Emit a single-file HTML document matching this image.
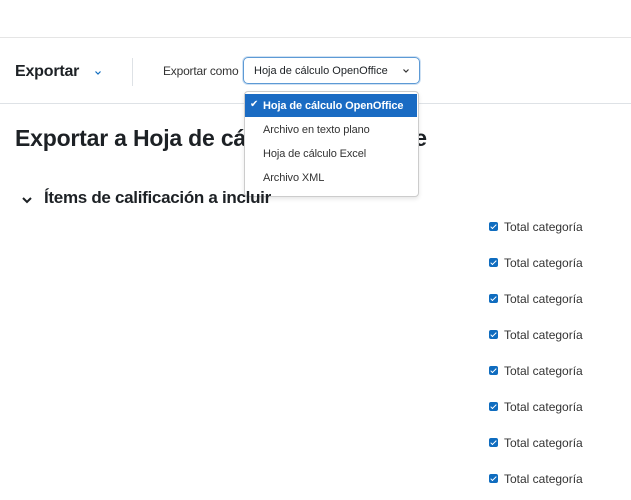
<!DOCTYPE html>
<html><head><style>
body{margin:0;width:631px;height:500px;background:#fff;font-family:"Liberation Sans",Arial,sans-serif;color:#1d2125;position:relative;overflow:hidden}
.a{position:absolute}
.cb{position:absolute;left:489px;width:9px;height:9px;background:#0f6cbf;border-radius:2px}
.cb:after{content:"";position:absolute;left:3px;top:1px;width:2px;height:5px;border:solid #fff;border-width:0 1.5px 1.5px 0;transform:rotate(45deg)}
.tl{position:absolute;left:504px;font-size:12px;color:#333}
.opt{position:absolute;left:263px;font-size:11px;color:#333;letter-spacing:-0.1px}
</style></head><body>
<div class="a" style="left:0;top:37px;width:631px;height:1px;background:#e5e5e5"></div>
<div class="a" style="left:0;top:103px;width:631px;height:1px;background:#dee2e6"></div>
<div class="a" style="left:15px;top:63px;font-size:16px;font-weight:bold;letter-spacing:-0.2px">Exportar</div>
<svg class="a" style="left:94px;top:70px" width="8" height="6"><path d="M1.5 1.5L4 4L6.5 1.5" fill="none" stroke="#0f6cbf" stroke-width="1.2"/></svg>
<div class="a" style="left:132px;top:58px;width:1px;height:28px;background:#dee2e6"></div>
<div class="a" style="left:163px;top:64px;font-size:12px;color:#333;letter-spacing:-0.2px">Exportar como</div>
<div class="a" style="left:243px;top:57px;width:175px;height:25px;border:1.5px solid #5d9ad5;border-radius:5px;box-shadow:0 0 0 1px #cfe1f3"></div>
<div class="a" style="left:254px;top:65px;font-size:11px;color:#1d2125">Hoja de cálculo OpenOffice</div>
<svg class="a" style="left:402px;top:68px" width="8" height="6"><path d="M1.5 1.5L4 4L6.5 1.5" fill="none" stroke="#333" stroke-width="1.2"/></svg>
<div class="a" style="left:15px;top:125px;font-size:23px;font-weight:bold;letter-spacing:-0.2px">Exportar a Hoja de cálculo OpenOffice</div>
<div class="a" style="left:244px;top:91px;width:173px;height:104px;background:#fff;border:1px solid #ccc;border-radius:4px;box-shadow:0 2px 4px rgba(0,0,0,.1)"></div>
<div class="a" style="left:245px;top:94px;width:172px;height:23px;background:#1a6bc3"></div>
<div class="a" style="left:250px;top:99px;color:#fff;font-size:10px">✔</div>
<div class="opt" style="top:100px;color:#fff;font-weight:bold">Hoja de cálculo OpenOffice</div>
<div class="opt" style="top:124px">Archivo en texto plano</div>
<div class="opt" style="top:148px">Hoja de cálculo Excel</div>
<div class="opt" style="top:172px">Archivo XML</div>
<svg class="a" style="left:21px;top:195px" width="12" height="10"><path d="M2 3L6 7L10 3" fill="none" stroke="#1d2125" stroke-width="2"/></svg>
<div class="a" style="left:44px;top:188px;font-size:17px;font-weight:bold;letter-spacing:-0.3px">Ítems de calificación a incluir</div>
<div class="cb" style="top:222px"></div><div class="tl" style="top:220px">Total categoría</div>
<div class="cb" style="top:258px"></div><div class="tl" style="top:256px">Total categoría</div>
<div class="cb" style="top:294px"></div><div class="tl" style="top:292px">Total categoría</div>
<div class="cb" style="top:330px"></div><div class="tl" style="top:328px">Total categoría</div>
<div class="cb" style="top:366px"></div><div class="tl" style="top:364px">Total categoría</div>
<div class="cb" style="top:402px"></div><div class="tl" style="top:400px">Total categoría</div>
<div class="cb" style="top:438px"></div><div class="tl" style="top:436px">Total categoría</div>
<div class="cb" style="top:474px"></div><div class="tl" style="top:472px">Total categoría</div>
</body></html>
